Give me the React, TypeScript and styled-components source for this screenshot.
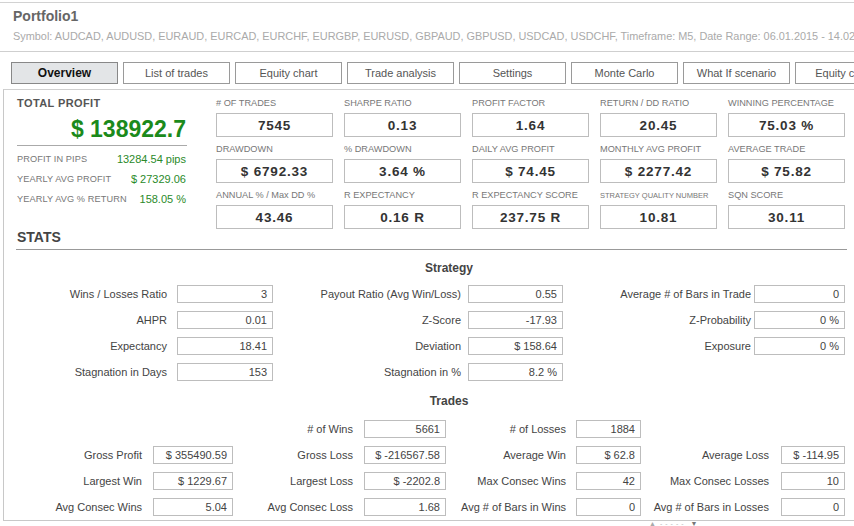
import React from "react";
import styled, { createGlobalStyle } from "styled-components";

const GlobalStyle = createGlobalStyle`
  html, body { margin: 0; padding: 0; background: #fff; }
  body { font-family: "Liberation Sans", Arial, sans-serif; overflow: hidden; }
  * { box-sizing: border-box; }
`;

const Page = styled.div`
  width: 854px;
  height: 526px;
  overflow: hidden;
  padding-top: 2px;
`;

const Header = styled.header`
  border-top: 1px solid #d2d2d2;
  border-bottom: 1px solid #cfcfcf;
  padding: 5px 0 8px 13px;
`;

const Title = styled.div`
  font-size: 14px;
  font-weight: 700;
  line-height: 16px;
  color: #666;
`;

const Subtitle = styled.div`
  margin-top: 5px;
  font-size: 10.9px;
  line-height: 14px;
  color: #aaa;
  white-space: nowrap;
  overflow: hidden;
`;

const Tabs = styled.nav`
  display: flex;
  gap: 5px;
  margin-top: 10px;
  padding-left: 11px;
`;

const Tab = styled.div<{ $active?: boolean }>`
  flex: 0 0 107px;
  height: 22px;
  border: 1px solid ${(p) => (p.$active ? "#888" : "#9a9a9a")};
  background: ${(p) => (p.$active ? "#e3e5e7" : "#fff")};
  color: ${(p) => (p.$active ? "#111" : "#555")};
  font-size: ${(p) => (p.$active ? "12px" : "11px")};
  font-weight: ${(p) => (p.$active ? 700 : 400)};
  line-height: 20px;
  text-align: center;
  white-space: nowrap;
  overflow: hidden;
`;

const Panel = styled.section`
  margin: 5px 0 0 3px;
  height: 432px;
  border-left: 1px solid #c8c8c8;
  border-top: 1px solid #d0d0d0;
  border-bottom: 1px solid #c8c8c8;
  padding: 7px 0 0 13px;
`;

const TopSection = styled.div`
  display: flex;
  align-items: flex-start;
`;

const Summary = styled.div`
  width: 170px;
`;

const SummaryTitle = styled.div`
  font-size: 11px;
  font-weight: 700;
  letter-spacing: 0.4px;
  line-height: 13px;
  color: #555;
`;

const BigValue = styled.div`
  margin-top: 5px;
  padding-bottom: 2px;
  border-bottom: 1px solid #aaa;
  font-size: 23px;
  font-weight: 700;
  line-height: 28px;
  color: #1b8a1b;
  text-align: right;
  padding-right: 1px;
`;

const SummaryRows = styled.div`
  margin-top: 3px;
`;

const SummaryRow = styled.div`
  display: flex;
  justify-content: space-between;
  align-items: center;
  height: 20px;
  padding-right: 1px;
`;

const SummaryLabel = styled.span`
  font-size: 9.2px;
  color: #777;
  letter-spacing: 0.1px;
`;

const SummaryValue = styled.span`
  font-size: 11px;
  color: #2a8a2a;
`;

const MetricsGrid = styled.div`
  margin-left: 29px;
  display: grid;
  grid-template-columns: repeat(5, 117px);
  column-gap: 11px;
  row-gap: 6px;
`;

const Metric = styled.div``;

const MetricLabel = styled.div<{ $small?: boolean }>`
  font-size: ${(p) => (p.$small ? "7.5px" : "9.2px")};
  line-height: 13px;
  color: #777;
  white-space: nowrap;
  margin-bottom: 3px;
`;

const MetricBox = styled.div`
  height: 24px;
  border: 1px solid #bdbdbd;
  display: flex;
  align-items: center;
  justify-content: center;
  font-size: 13.5px;
  font-weight: 700;
  letter-spacing: 0.8px;
  color: #333;
`;

const Stats = styled.div`
  width: 830px;
`;

const StatsHeading = styled.div`
  font-size: 14px;
  font-weight: 700;
  line-height: 16px;
  color: #444;
  padding-bottom: 4px;
  border-bottom: 1px solid #999;
  margin-left: -1px;
  padding-left: 1px;
`;

const SectionTitle = styled.div<{ $top: number }>`
  margin-top: ${(p) => p.$top}px;
  padding-left: 34px;
  text-align: center;
  font-size: 12px;
  font-weight: 700;
  line-height: 14px;
  color: #444;
`;

const FieldGrid = styled.div<{ $cols: string; $top: number }>`
  margin-top: ${(p) => p.$top}px;
  display: grid;
  grid-template-columns: ${(p) => p.$cols};
  grid-auto-rows: 18px;
  row-gap: 8px;
`;

const FieldLabel = styled.div<{ $pr: number }>`
  text-align: right;
  padding-right: ${(p) => p.$pr}px;
  font-size: 11px;
  line-height: 18px;
  color: #444;
  white-space: nowrap;
`;

const FieldValue = styled.div`
  border: 1px solid #bdbdbd;
  text-align: right;
  padding-right: 5px;
  font-size: 11px;
  line-height: 16px;
  color: #444;
  white-space: nowrap;
`;

const Empty = styled.div``;

const ScrollHint = styled.div`
  display: flex;
  align-items: center;
  gap: 4px;
  padding-left: 649px;
  height: 5px;
  font-size: 7px;
  line-height: 5px;
  color: #999;
`;

const Arrow = styled.span<{ $dark?: boolean }>`
  color: ${(p) => (p.$dark ? "#777" : "#aaa")};
  font-size: 7px;
`;

const Dashes = styled.span`
  letter-spacing: 3px;
  color: #bbb;
`;

type Cell = [string, string] | null;

const tabs = [
  "Overview",
  "List of trades",
  "Equity chart",
  "Trade analysis",
  "Settings",
  "Monte Carlo",
  "What If scenario",
  "Equity control",
];

const metrics: { label: string; value: string; small?: boolean }[] = [
  { label: "# OF TRADES", value: "7545" },
  { label: "SHARPE RATIO", value: "0.13" },
  { label: "PROFIT FACTOR", value: "1.64" },
  { label: "RETURN / DD RATIO", value: "20.45" },
  { label: "WINNING PERCENTAGE", value: "75.03 %" },
  { label: "DRAWDOWN", value: "$ 6792.33" },
  { label: "% DRAWDOWN", value: "3.64 %" },
  { label: "DAILY AVG PROFIT", value: "$ 74.45" },
  { label: "MONTHLY AVG PROFIT", value: "$ 2277.42" },
  { label: "AVERAGE TRADE", value: "$ 75.82" },
  { label: "ANNUAL % / Max DD %", value: "43.46" },
  { label: "R EXPECTANCY", value: "0.16 R" },
  { label: "R EXPECTANCY SCORE", value: "237.75 R" },
  { label: "STRATEGY QUALITY NUMBER", value: "10.81", small: true },
  { label: "SQN SCORE", value: "30.11" },
];

const strategyRows: Cell[][] = [
  [["Wins / Losses Ratio", "3"], ["Payout Ratio (Avg Win/Loss)", "0.55"], ["Average # of Bars in Trade", "0"]],
  [["AHPR", "0.01"], ["Z-Score", "-17.93"], ["Z-Probability", "0 %"]],
  [["Expectancy", "18.41"], ["Deviation", "$ 158.64"], ["Exposure", "0 %"]],
  [["Stagnation in Days", "153"], ["Stagnation in %", "8.2 %"], null],
];
const strategyPad = [10, 7, 3];

const tradeRows: Cell[][] = [
  [null, ["# of Wins", "5661"], ["# of Losses", "1884"], null],
  [["Gross Profit", "$ 355490.59"], ["Gross Loss", "$ -216567.58"], ["Average Win", "$ 62.8"], ["Average Loss", "$ -114.95"]],
  [["Largest Win", "$ 1229.67"], ["Largest Loss", "$ -2202.8"], ["Max Consec Wins", "42"], ["Max Consec Losses", "10"]],
  [["Avg Consec Wins", "5.04"], ["Avg Consec Loss", "1.68"], ["Avg # of Bars in Wins", "0"], ["Avg # of Bars in Losses", "0"]],
];
const tradePad = [11, 11, 10, 12];

function Fields({ rows, pads }: { rows: Cell[][]; pads: number[] }) {
  return (
    <>
      {rows.map((row, r) =>
        row.map((cell, c) =>
          cell ? (
            <React.Fragment key={`${r}-${c}`}>
              <FieldLabel $pr={pads[c]}>{cell[0]}</FieldLabel>
              <FieldValue>{cell[1]}</FieldValue>
            </React.Fragment>
          ) : (
            <React.Fragment key={`${r}-${c}`}>
              <Empty />
              <Empty />
            </React.Fragment>
          )
        )
      )}
    </>
  );
}

export default function App() {
  return (
    <>
      <GlobalStyle />
      <Page>
        <Header>
          <Title>Portfolio1</Title>
          <Subtitle>
            Symbol: AUDCAD, AUDUSD, EURAUD, EURCAD, EURCHF, EURGBP, EURUSD, GBPAUD, GBPUSD, USDCAD, USDCHF,
            Timeframe: M5, Date Range: 06.01.2015 - 14.02.2015
          </Subtitle>
        </Header>
        <Tabs>
          {tabs.map((t, i) => (
            <Tab key={t} $active={i === 0}>
              {t}
            </Tab>
          ))}
        </Tabs>
        <Panel>
          <TopSection>
            <Summary>
              <SummaryTitle>TOTAL PROFIT</SummaryTitle>
              <BigValue>$ 138922.7</BigValue>
              <SummaryRows>
                <SummaryRow>
                  <SummaryLabel>PROFIT IN PIPS</SummaryLabel>
                  <SummaryValue>13284.54 pips</SummaryValue>
                </SummaryRow>
                <SummaryRow>
                  <SummaryLabel>YEARLY AVG PROFIT</SummaryLabel>
                  <SummaryValue>$ 27329.06</SummaryValue>
                </SummaryRow>
                <SummaryRow>
                  <SummaryLabel>YEARLY AVG % RETURN</SummaryLabel>
                  <SummaryValue>158.05 %</SummaryValue>
                </SummaryRow>
              </SummaryRows>
            </Summary>
            <MetricsGrid>
              {metrics.map((m) => (
                <Metric key={m.label}>
                  <MetricLabel $small={m.small}>{m.label}</MetricLabel>
                  <MetricBox>{m.value}</MetricBox>
                </Metric>
              ))}
            </MetricsGrid>
          </TopSection>
          <Stats>
            <StatsHeading>STATS</StatsHeading>
            <SectionTitle $top={11}>Strategy</SectionTitle>
            <FieldGrid $top={10} $cols="160px 96px 195px 95px 191px 91px">
              <Fields rows={strategyRows} pads={strategyPad} />
            </FieldGrid>
            <SectionTitle $top={13}>Trades</SectionTitle>
            <FieldGrid $top={12} $cols="136px 80px 131px 82px 130px 65px 140px 64px">
              <Fields rows={tradeRows} pads={tradePad} />
            </FieldGrid>
          </Stats>
        </Panel>
        <ScrollHint>
          <Arrow>▲</Arrow>
          <Dashes>-----</Dashes>
          <Arrow $dark>▼</Arrow>
        </ScrollHint>
      </Page>
    </>
  );
}
